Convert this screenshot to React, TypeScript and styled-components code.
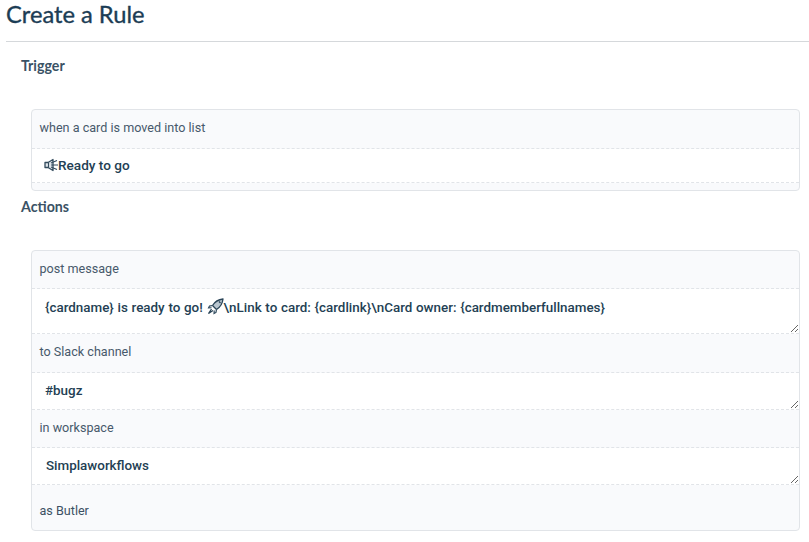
import React from 'react';
import styled, { createGlobalStyle } from 'styled-components';

const GlobalStyle = createGlobalStyle`
  html, body {
    margin: 0;
    padding: 0;
    background: #fff;
    color: #243f54;
    font-family: Roboto, "Liberation Sans", sans-serif;
    overflow: hidden;
  }
`;

function SpeakerIcon() {
  return (
    <Glyph width="14" height="14" viewBox="0 0 14 14">
      <path d="M1 4.5h3L9 1.5v11L4 9.5H1z" fill="#dfe5ea" stroke="#334b5d" strokeWidth="1.3" strokeLinejoin="round" />
      <path d="M4.5 4.5v5M7 5l6-2.5M7 7h7M7 9l6 2.5" fill="none" stroke="#334b5d" strokeWidth="1.1" />
    </Glyph>
  );
}

function RocketIcon() {
  return (
    <Glyph width="17" height="17" viewBox="0 0 17 17">
      <path d="M16 1C11.5 1.5 8 3.5 5.5 7.5l4 4C13.5 9 15.5 5.5 16 1z" fill="#b9c6d0" stroke="#2a4558" strokeWidth="1.3" strokeLinejoin="round" />
      <path d="M5.5 7.5L2.5 8l-1 2 3-.2M9.5 11.5L9 14.5l-2 1 .2-3" fill="#dde4ea" stroke="#2a4558" strokeWidth="1.1" />
      <path d="M4.5 11l-3 4.5 4.5-3M12 3.5l1.5 1.5" fill="none" stroke="#2a4558" strokeWidth="1.3" />
    </Glyph>
  );
}

export default function App() {
  return (
    <Page>
      <GlobalStyle />
      <Title>Create a Rule</Title>
      <Section>
        <SectionLabel>Trigger</SectionLabel>
        <Card>
          <LabelRow $height={39}>when a card is moved into list</LabelRow>
          <TriggerValue><SpeakerIcon />Ready to go</TriggerValue>
          <CardFoot />
        </Card>
      </Section>
      <ActionsLabel>Actions</ActionsLabel>
      <Card>
        <LabelRow>post message</LabelRow>
        <InputRow $height={45}>
          <InputText $top={9}>
            {'{cardname} is ready to go! '}<RocketIcon />{'\\nLink to card: {cardlink}\\nCard owner: {cardmemberfullnames}'}
          </InputText>
        </InputRow>
        <LabelRow $height={39}>to Slack channel</LabelRow>
        <InputRow $height={37}>
          <InputText $top={10}>#bugz</InputText>
        </InputRow>
        <LabelRow>in workspace</LabelRow>
        <InputRow $height={37}>
          <InputText $top={10} $left={14}>Simplaworkflows</InputText>
        </InputRow>
        <LastRow>as Butler</LastRow>
      </Card>
    </Page>
  );
}

const Page = styled.div`
  width: 809px;
  height: 542px;
  overflow: hidden;
  padding: 0 0 0 6px;
  box-sizing: border-box;
`;

const Title = styled.h1`
  margin: 0;
  height: 42px;
  border-bottom: 1px solid #d5d8db;
  box-sizing: border-box;
  font: 400 23.7px/29px Lato, sans-serif;
  -webkit-text-stroke: 0.35px #1c3d55;
  color: #1c3d55;
`;

const Section = styled.section`
  padding-bottom: 0;
`;

const SectionLabel = styled.h3`
  margin: 0 0 0 15px;
  height: 67px;
  padding-top: 15px;
  box-sizing: border-box;
  font: 700 14.2px/17px Lato, sans-serif;
  color: #3a5265;
`;

const ActionsLabel = styled(SectionLabel)`
  height: 59px;
  padding-top: 7px;
`;

const Card = styled.div`
  margin-left: 25px;
  width: 769px;
  box-sizing: border-box;
  border: 1px solid #e1e4e8;
  border-radius: 4px;
  background: #f9fafc;
`;

const LabelRow = styled.div<{ $height?: number }>`
  height: ${p => p.$height ?? 38}px;
  box-sizing: border-box;
  padding: 10px 8px 0 7.5px;
  font-size: 12.6px;
  line-height: 16px;
  color: #47596b;
  border-bottom: 1px dashed #e1e4e8;
`;

const TriggerValue = styled.div`
  height: 34px;
  box-sizing: border-box;
  padding: 0 12px 2px;
  display: flex;
  align-items: center;
  background: #fff;
  font-size: 13.6px;
  font-weight: 500;
  color: #243f54;
  border-bottom: 1px dashed #e1e4e8;
`;

const CardFoot = styled.div`
  height: 7px;
`;

const InputRow = styled.div<{ $height: number }>`
  height: ${p => p.$height}px;
  box-sizing: border-box;
  background: #fff;
  border-bottom: 1px dashed #e1e4e8;
`;

const InputText = styled.div<{ $top: number; $left?: number }>`
  height: 100%;
  box-sizing: border-box;
  padding: ${p => p.$top}px 0 0 ${p => p.$left ?? 13}px;
  overflow: auto;
  resize: vertical;
  font-size: 13.4px;
  font-weight: 500;
  word-spacing: 0.4px;
  line-height: 16px;
  color: #243f54;
  white-space: pre;
`;

const LastRow = styled.div`
  height: 45px;
  box-sizing: border-box;
  padding: 18px 8px 0 7.5px;
  font-size: 12.6px;
  line-height: 16px;
  color: #3c5163;
`;

const Glyph = styled.svg`
  flex: none;
  vertical-align: -3px;
`;
